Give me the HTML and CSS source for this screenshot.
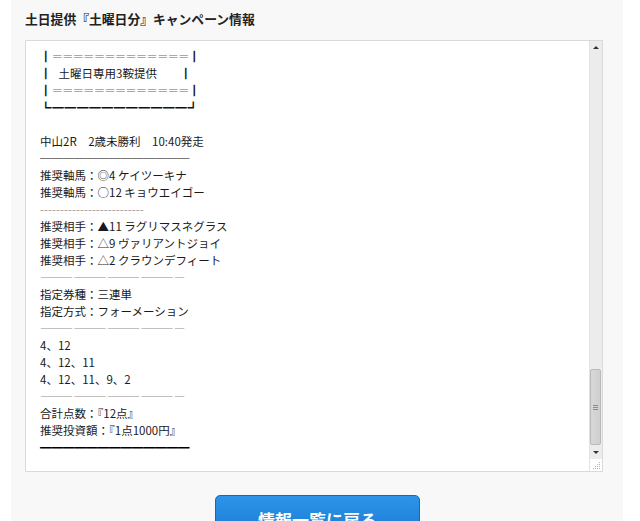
FILE: index.html
```html
<!DOCTYPE html>
<html lang="ja">
<head>
<meta charset="utf-8">
<title>土日提供『土曜日分』キャンペーン情報</title>
<link rel="stylesheet" href="styles.css">
</head>
<body>
<div class="panel">
  <h2 class="title">土日提供『土曜日分』キャンペーン情報</h2>
  <div class="memo">
    <div class="memo-text">
      <div class="ln"><span class="bar">┃</span><span class="eq">＝＝＝＝＝＝＝＝＝＝＝＝＝</span><span class="bar">┃</span></div>
      <div class="ln"><span class="bar">┃</span><span class="inset">土曜日専用3鞍提供</span>　　<span class="bar">┃</span></div>
      <div class="ln"><span class="bar">┃</span><span class="eq">＝＝＝＝＝＝＝＝＝＝＝＝＝</span><span class="bar">┃</span></div>
      <div class="ln"><span class="corner">┗━━━━━━━━━━━┛</span></div>
      <div class="ln">&nbsp;</div>
      <div class="ln">中山2R　2歳未勝利　10:40発走</div>
      <div class="ln"><span class="rule-solid">─────────────</span></div>
      <div class="ln">推奨軸馬：◎4 ケイツーキナ</div>
      <div class="ln">推奨軸馬：○12 キョウエイゴー</div>
      <div class="ln"><span class="rule-dash">--------------------------</span></div>
      <div class="ln">推奨相手：▲11 ラグリマスネグラス</div>
      <div class="ln">推奨相手：△9 ヴァリアントジョイ</div>
      <div class="ln">推奨相手：△2 クラウンデフィート</div>
      <div class="ln"><span class="seg">―――</span><span class="seg">―――</span><span class="seg">―――</span><span class="seg">―――</span><span class="seg">―</span></div>
      <div class="ln">指定券種：三連単</div>
      <div class="ln">指定方式：フォーメーション</div>
      <div class="ln"><span class="seg">―――</span><span class="seg">―――</span><span class="seg">―――</span><span class="seg">―――</span><span class="seg">―</span></div>
      <div class="ln">4、12</div>
      <div class="ln">4、12、11</div>
      <div class="ln">4、12、11、9、2</div>
      <div class="ln"><span class="seg">―――</span><span class="seg">―――</span><span class="seg">―――</span><span class="seg">―――</span><span class="seg">―</span></div>
      <div class="ln">合計点数：『12点』</div>
      <div class="ln">推奨投資額：『1点1000円』</div>
      <div class="ln"><span class="rule-bold">━━━━━━━━━━━━━</span></div>
    </div>
    <div class="scrollbar">
      <div class="sb-btn"><span class="tri-up"></span></div>
      <div class="sb-track">
        <div class="sb-thumb"><span class="grip"></span></div>
      </div>
      <div class="sb-btn"><span class="tri-down"></span></div>
      <div class="sb-corner">
        <svg width="11" height="11" viewBox="0 0 11 11"><g fill="#b5b5b5"><rect x="8" y="2" width="1" height="1"/><rect x="6" y="4" width="1" height="1"/><rect x="8" y="4" width="1" height="1"/><rect x="4" y="6" width="1" height="1"/><rect x="6" y="6" width="1" height="1"/><rect x="8" y="6" width="1" height="1"/><rect x="2" y="8" width="1" height="1"/><rect x="4" y="8" width="1" height="1"/><rect x="6" y="8" width="1" height="1"/><rect x="8" y="8" width="1" height="1"/></g></svg>
      </div>
    </div>
  </div>
  <a class="btn" href="#">情報一覧に戻る</a>
</div>
</body>
</html>
```

FILE: styles.css
```css
html, body {
  margin: 0;
  padding: 0;
  background: #ffffff;
}
body {
  font-family: "Noto Sans CJK JP", "Noto Sans", sans-serif;
  color: #222;
  overflow: hidden;
}
.panel {
  margin-left: 11px;
  width: 612px;
  min-height: 521px;
  box-sizing: border-box;
  padding: 10px 20px 0 14px;
  background: #f8f8f8;
}
.title {
  margin: 0 0 13px;
  font-size: 12.8px;
  line-height: 17px;
  font-weight: bold;
  color: #222;
}
.memo {
  display: flex;
  height: 432px;
  box-sizing: border-box;
  border: 1px solid #dadada;
  background: #fff;
}
.memo-text {
  flex: 1;
  padding: 7px 14px 8px;
  overflow: hidden;
  font-size: 11.5px;
  line-height: 17px;
  color: #1a1a1a;
  white-space: nowrap;
}
.ln {
  height: 17px;
}
.bar {
  color: #111;
}
.eq {
  color: #9a9a9a;
  letter-spacing: -0.96px;
}
.inset {
  margin-left: 7px;
}
.corner {
  color: #111;
  letter-spacing: 0.8px;
}
.rule-solid {
  color: #000;
}
.rule-bold {
  color: #000;
}
.rule-dash {
  color: #9a9a9a;
}
.seg {
  display: inline-block;
  font-size: 11px;
  color: #8f8f8f;
  margin-right: 0.5px;
}
.scrollbar {
  width: 12px;
  display: flex;
  flex-direction: column;
  background: #ececec;
  border-left: 1px solid #e2e2e2;
}
.sb-btn {
  height: 13px;
  display: flex;
  align-items: center;
  justify-content: center;
}
.tri-up {
  width: 0;
  height: 0;
  border-left: 3px solid transparent;
  border-right: 3px solid transparent;
  border-bottom: 3px solid #333;
}
.tri-down {
  width: 0;
  height: 0;
  border-left: 3px solid transparent;
  border-right: 3px solid transparent;
  border-top: 3px solid #333;
}
.sb-track {
  flex: 1;
  display: flex;
  flex-direction: column;
  justify-content: flex-end;
  padding: 0 1px 1px 0;
}
.sb-thumb {
  height: 76px;
  box-sizing: border-box;
  border: 1px solid #b9b9b9;
  border-radius: 2px;
  background: linear-gradient(to right, #d8d8d8, #cfcfcf);
  display: flex;
  align-items: center;
  justify-content: center;
}
.grip {
  width: 5px;
  height: 5px;
  background: repeating-linear-gradient(to bottom, #8c8c8c 0 1px, transparent 1px 2px);
}
.sb-corner {
  height: 12px;
  background: #fff;
  display: flex;
  align-items: flex-end;
  justify-content: flex-end;
}
.btn {
  display: block;
  width: 205px;
  margin: 23px 0 0 190px;
  box-sizing: border-box;
  padding: 11px 0 12px;
  border: 1px solid #1668b8;
  border-radius: 5px;
  background: linear-gradient(to bottom, #2c95ea, #1574cb);
  color: #fff;
  font-size: 17px;
  line-height: 26px;
  font-weight: bold;
  text-align: center;
  text-decoration: none;
}
```
